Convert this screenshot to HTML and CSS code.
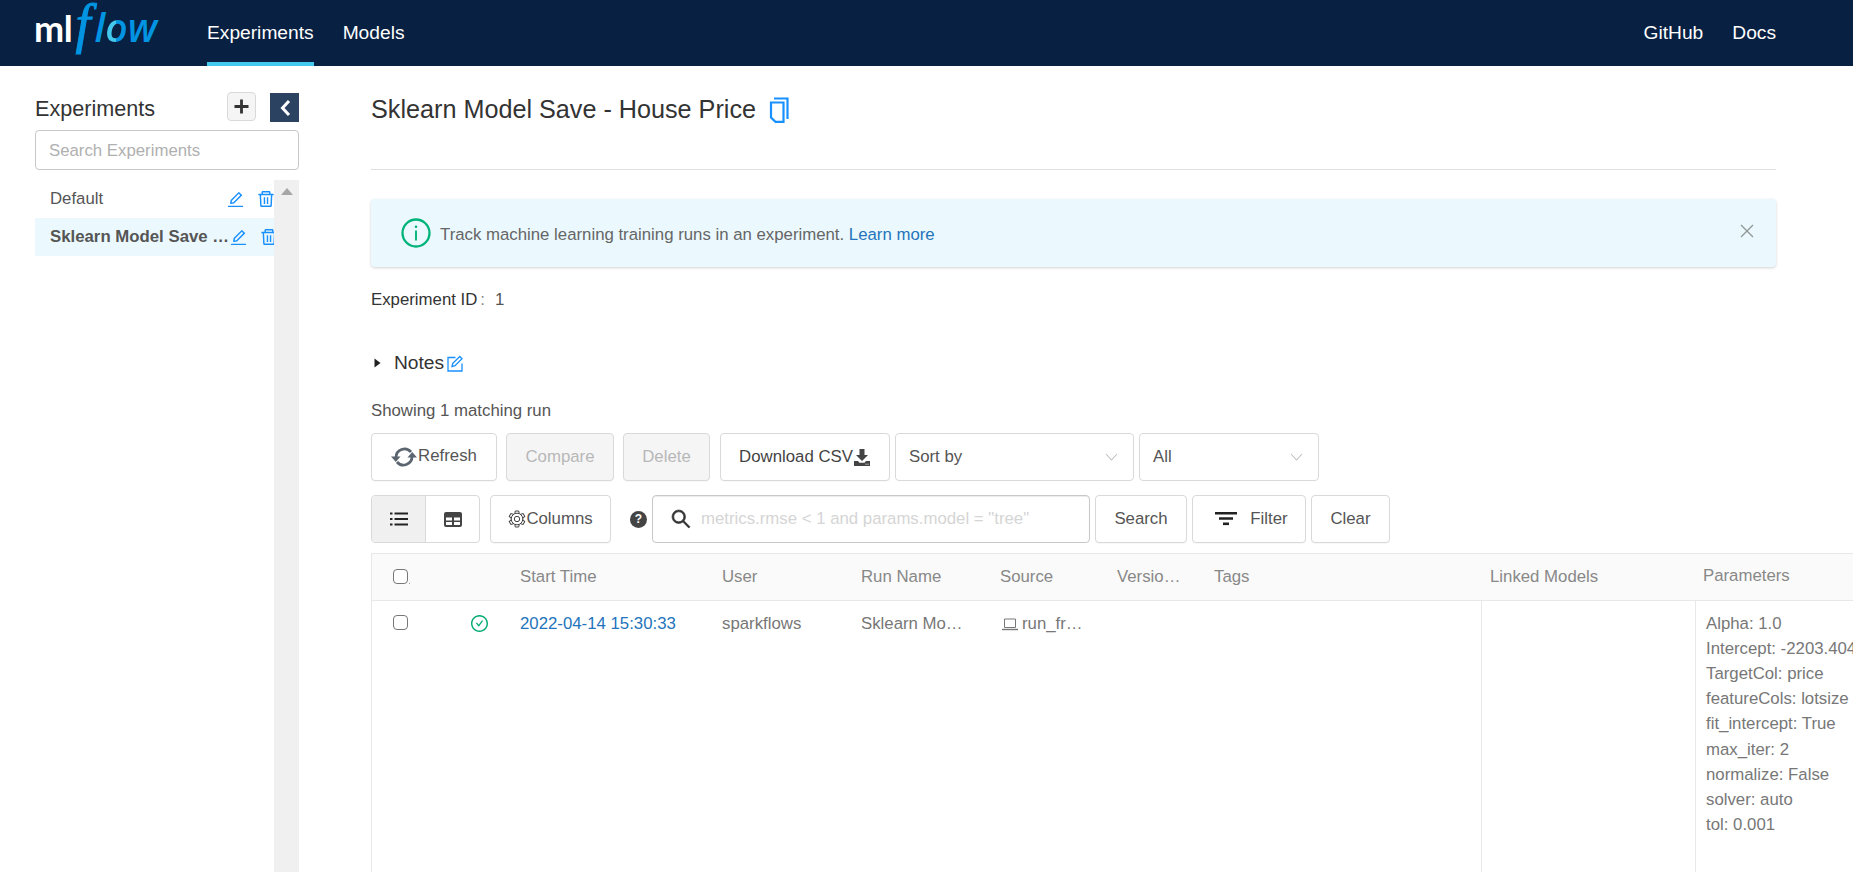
FILE: index.html
```html
<!DOCTYPE html>
<html lang="en">
<head>
<meta charset="utf-8">
<title>MLflow Experiments</title>
<link rel="stylesheet" href="styles.css">
</head>
<body>
<header class="topbar">
  <div class="logo"><span class="logo-ml">ml</span><span class="logo-f">f</span><span class="logo-low">l<span class="logo-o">o</span>w</span></div>
  <nav class="nav-left">
    <a class="nav-link active">Experiments</a>
    <a class="nav-link">Models</a>
  </nav>
  <nav class="nav-right">
    <a class="nav-link">GitHub</a>
    <a class="nav-link">Docs</a>
  </nav>
</header>
<div class="page">
  <aside class="sidebar">
    <div class="side-head">
      <span class="side-title">Experiments</span>
      <button class="plus-btn"><svg width="15" height="15" viewBox="0 0 15 15"><path d="M7.5 0.500v14M0.500 7.500h14" stroke="#333" stroke-width="2.800"/></svg></button>
      <button class="collapse-btn"><svg width="12" height="18" viewBox="0 0 12 18"><path d="M10 2L3.500 9l6.500 7" fill="none" stroke="#fff" stroke-width="3"/></svg></button>
    </div>
    <div class="side-search">Search Experiments</div>
    <div class="side-list">
      <div class="side-items">
        <div class="side-item">
          <span class="side-name">Default</span>
          <svg class="ico-edit" viewBox="64 64 896 896"><path d="M257.7 752c2 0 4-.2 6-.5L431.9 722c2-.4 3.9-1.3 5.3-2.8l423.9-423.9a9.96 9.96 0 0 0 0-14.1L694.9 114.9c-1.9-1.9-4.4-2.9-7.1-2.9s-5.2 1-7.1 2.9L256.8 538.8c-1.5 1.5-2.4 3.3-2.8 5.3l-29.5 168.2a33.5 33.5 0 0 0 9.4 29.8c6.6 6.4 14.9 9.9 23.8 9.9zm67.4-174.4L687.8 215l73.3 73.3-362.7 362.6-88.9 15.7 15.6-89zM880 836H144c-17.7 0-32 14.3-32 32v36c0 4.4 3.6 8 8 8h784c4.4 0 8-3.6 8-8v-36c0-17.7-14.3-32-32-32z"/></svg>
          <svg class="ico-del" viewBox="64 64 896 896"><path d="M360 184h-8c4.4 0 8-3.6 8-8v8h304v-8c0 4.4 3.6 8 8 8h-8v72h72v-80c0-35.3-28.7-64-64-64H352c-35.3 0-64 28.7-64 64v80h72v-72zm504 72H160c-17.7 0-32 14.3-32 32v32c0 4.4 3.6 8 8 8h60.4l24.7 523c1.6 34.1 29.8 61 63.9 61h454c34.2 0 62.3-26.8 63.9-61l24.7-523H888c4.4 0 8-3.6 8-8v-32c0-17.7-14.3-32-32-32zM731.3 840H292.7l-24.2-512h487l-24.2 512z"/><path d="M400 420h70v340h-70zM554 420h70v340h-70z"/></svg>
        </div>
        <div class="side-item selected">
          <span class="side-name">Sklearn Model Save - House Price</span>
          <svg class="ico-edit" viewBox="64 64 896 896"><path d="M257.7 752c2 0 4-.2 6-.5L431.9 722c2-.4 3.9-1.3 5.3-2.8l423.9-423.9a9.96 9.96 0 0 0 0-14.1L694.9 114.9c-1.9-1.9-4.4-2.9-7.1-2.9s-5.2 1-7.1 2.9L256.8 538.8c-1.5 1.5-2.4 3.3-2.8 5.3l-29.5 168.2a33.5 33.5 0 0 0 9.4 29.8c6.6 6.4 14.9 9.9 23.8 9.9zm67.4-174.4L687.8 215l73.3 73.3-362.7 362.6-88.9 15.7 15.6-89zM880 836H144c-17.7 0-32 14.3-32 32v36c0 4.4 3.6 8 8 8h784c4.4 0 8-3.6 8-8v-36c0-17.7-14.3-32-32-32z"/></svg>
          <svg class="ico-del" viewBox="64 64 896 896"><path d="M360 184h-8c4.4 0 8-3.6 8-8v8h304v-8c0 4.4 3.6 8 8 8h-8v72h72v-80c0-35.3-28.7-64-64-64H352c-35.3 0-64 28.7-64 64v80h72v-72zm504 72H160c-17.7 0-32 14.3-32 32v32c0 4.4 3.6 8 8 8h60.4l24.7 523c1.6 34.1 29.8 61 63.9 61h454c34.2 0 62.3-26.8 63.9-61l24.7-523H888c4.4 0 8-3.6 8-8v-32c0-17.7-14.3-32-32-32zM731.3 840H292.7l-24.2-512h487l-24.2 512z"/><path d="M400 420h70v340h-70zM554 420h70v340h-70z"/></svg>
        </div>
      </div>
      <div class="side-scroll"><span class="scroll-up"></span></div>
    </div>
  </aside>
  <main class="main">
    <div class="title-row">
      <h1 class="title">Sklearn Model Save - House Price</h1>
      <svg class="ico-copy" width="20" height="26" viewBox="0 0 20 26"><path d="M5 1.500h13.500v20.500" fill="none" stroke="#1890ff" stroke-width="2.200"/><path d="M2 5.500h12.500v19.300H6.500L2 20.500z" fill="none" stroke="#1890ff" stroke-width="2.200"/></svg>
    </div>
    <hr class="rule">
    <div class="alert">
      <svg class="ico-info" width="30" height="30" viewBox="0 0 30 30"><circle cx="15" cy="15" r="13.500" fill="none" stroke="#00b379" stroke-width="2.300"/><path d="M15 12.500v10" stroke="#00b379" stroke-width="1.900"/><circle cx="15" cy="8.700" r="1.300" fill="#00b379"/></svg>
      <span class="alert-text">Track machine learning training runs in an experiment. <a class="link">Learn more</a></span>
      <svg class="ico-close" width="14" height="14" viewBox="0 0 14 14"><path d="M1 1l12 12M13 1L1 13" stroke="#909896" stroke-width="1.400"/></svg>
    </div>
    <div class="exp-id"><span class="exp-label">Experiment ID</span><span class="exp-colon">:</span><span class="exp-val">1</span></div>
    <div class="notes">
      <svg class="caret" width="7" height="10" viewBox="0 0 7 10"><path d="M0.500 0.500L6.500 5L0.500 9.500z" fill="#222"/></svg>
      <span class="notes-text">Notes</span>
      <svg class="ico-note" width="16" height="17" viewBox="0 0 16 17"><path d="M8.500 2.500H1v13.500h14V8.500" fill="none" stroke="#1890ff" stroke-width="1.300"/><path d="M5 11.500l.8-3.200L12.800 1.500l2.200 2.200L8 10.700z" fill="none" stroke="#1890ff" stroke-width="1.300"/></svg>
    </div>
    <div class="showing">Showing 1 matching run</div>
    <div class="toolbar tb-one">
      <button class="btn b-refresh"><svg width="26" height="22" viewBox="0 0 26 22"><path d="M5 11.500A8.500 8.500 0 0 1 20 6" fill="none" stroke="#5a6570" stroke-width="2.800"/><path d="M21 10.500A8.500 8.500 0 0 1 6 16" fill="none" stroke="#5a6570" stroke-width="2.800"/><path d="M0 10.500h9.500L4.800 16zM16.500 11.500h9.500L21.200 6z" fill="#5a6570"/></svg><span class="refresh-text">Refresh</span></button>
      <button class="btn disabled b-compare">Compare</button>
      <button class="btn disabled b-delete">Delete</button>
      <button class="btn b-download"><span>Download CSV</span><svg width="18" height="17" viewBox="0 0 18 17"><path d="M6.500 0h5v6H15l-6 6-6-6h3.500z" fill="#444"/><path d="M1 12h4l1.500 1.700h5L13 12h4v5H1z" fill="#444"/><path d="M12.500 15.200h1M14.500 15.200h1" stroke="#fff"/></svg></button>
      <div class="select s-sort"><span>Sort by</span><svg width="13" height="8" viewBox="0 0 13 8"><path d="M1 1l5.500 6L12 1" fill="none" stroke="#bfbfbf" stroke-width="1.100"/></svg></div>
      <div class="select s-all"><span>All</span><svg width="13" height="8" viewBox="0 0 13 8"><path d="M1 1l5.500 6L12 1" fill="none" stroke="#bfbfbf" stroke-width="1.100"/></svg></div>
    </div>
    <div class="toolbar tb-two">
      <div class="switch">
        <span class="sw-item on"><svg width="18" height="14" viewBox="0 0 18 14"><path d="M0 1.500h2.500M4.500 1.500H18M0 7h2.500M4.500 7H18M0 12.500h2.500M4.500 12.500H18" stroke="#222" stroke-width="2.200"/></svg></span>
        <span class="sw-item"><svg width="18" height="15" viewBox="0 0 18 15"><path d="M2 0h14a2 2 0 0 1 2 2v11a2 2 0 0 1-2 2H2a2 2 0 0 1-2-2V2a2 2 0 0 1 2-2z" fill="#444"/><path d="M2 5.500h6v3H2zM10 5.500h6v3h-6zM2 10h6v3H2zM10 10h6v3h-6z" fill="#fff"/></svg></span>
      </div>
      <button class="btn b-columns"><svg width="18" height="18" viewBox="0 0 18 18"><g fill="none" stroke="#444" stroke-width="1"><circle cx="9" cy="9" r="2.700"/><circle cx="9" cy="9" r="5.800"/><path d="M6.800 3.500L7.300 1h3.400l.5 2.500"/><path d="M6.800 3.500L7.300 1h3.400l.5 2.500" transform="rotate(60 9 9)"/><path d="M6.800 3.500L7.300 1h3.400l.5 2.500" transform="rotate(120 9 9)"/><path d="M6.800 3.500L7.300 1h3.400l.5 2.500" transform="rotate(180 9 9)"/><path d="M6.800 3.500L7.300 1h3.400l.5 2.500" transform="rotate(240 9 9)"/><path d="M6.800 3.500L7.300 1h3.400l.5 2.500" transform="rotate(300 9 9)"/></g></svg><span>Columns</span></button>
      <span class="help">?</span>
      <div class="search-box">
        <svg class="ico-search" viewBox="64 64 896 896"><path d="M909.6 854.5L649.9 594.8C690.2 542.7 712 479 712 412c0-80.2-31.3-155.4-87.9-212.1-56.6-56.7-132-87.9-212.1-87.9s-155.5 31.3-212.1 87.9C143.2 256.5 112 331.8 112 412c0 80.1 31.3 155.5 87.9 212.1C256.5 680.8 331.8 712 412 712c67 0 130.6-21.8 182.7-62l259.7 259.6a8.2 8.2 0 0 0 11.6 0l43.6-43.5a8.2 8.2 0 0 0 0-11.6zM570.4 570.4C528 612.7 471.8 636 412 636s-116-23.3-158.4-65.6C211.3 528 188 471.8 188 412s23.3-116.1 65.6-158.4C296 211.3 352.2 188 412 188s116.1 23.2 158.4 65.6S636 352.2 636 412s-23.3 116.1-65.6 158.4z"/></svg>
        <span class="placeholder">metrics.rmse &lt; 1 and params.model = "tree"</span>
      </div>
      <button class="btn b-search">Search</button>
      <button class="btn b-filter"><svg width="22" height="14" viewBox="0 0 22 14"><path d="M0 1.200h22M4 6.500h14" stroke="#222" stroke-width="2.400"/><path d="M8 11.800h6" stroke="#222" stroke-width="2.600"/></svg><span>Filter</span></button>
      <button class="btn b-clear">Clear</button>
    </div>
    <div class="table">
      <div class="thead">
        <span class="col c-check"><span class="checkbox"></span><i class="dot"></i></span>
        <span class="col c-status"></span>
        <span class="col c-time">Start Time</span>
        <span class="col c-user">User</span>
        <span class="col c-name">Run Name</span>
        <span class="col c-source">Source</span>
        <span class="col c-version">Versio…</span>
        <span class="col c-tags">Tags</span>
        <span class="col c-linked">Linked Models</span>
        <span class="col c-params">Parameters</span>
      </div>
      <div class="tbody">
        <span class="col c-check"><span class="checkbox"></span></span>
        <span class="col c-status"><svg class="ico-ok" viewBox="64 64 896 896"><path d="M699 353h-46.900c-10.200 0-19.900 4.900-25.900 13.300L469 584.300l-71.200-98.800c-6-8.300-15.600-13.300-25.900-13.300H325c-6.500 0-10.300 7.400-6.500 12.700l124.600 172.800a31.800 31.800 0 0 0 51.700 0l210.600-292c3.900-5.300.1-12.700-6.400-12.700z"/><path d="M512 64C264.600 64 64 264.600 64 512s200.600 448 448 448 448-200.600 448-448S759.400 64 512 64zm0 820c-205.400 0-372-166.600-372-372s166.600-372 372-372 372 166.600 372 372-166.600 372-372 372z"/></svg></span>
        <span class="col c-time"><a class="link">2022-04-14 15:30:33</a></span>
        <span class="col c-user">sparkflows</span>
        <span class="col c-name">Sklearn Mo…</span>
        <span class="col c-source"><svg class="ico-laptop" width="16" height="13" viewBox="0 0 16 13"><path d="M2.500 1h11v8.500h-11z" fill="none" stroke="#777"/><path d="M0 11.500h16" stroke="#777" stroke-width="1.400"/></svg>run_fr…</span>
        <span class="col c-version"></span>
        <span class="col c-tags"></span>
        <span class="col c-linked"></span>
        <div class="col c-params">
          <div>Alpha: 1.0</div>
          <div>Intercept: -2203.4045</div>
          <div>TargetCol: price</div>
          <div>featureCols: lotsize</div>
          <div>fit_intercept: True</div>
          <div>max_iter: 2</div>
          <div>normalize: False</div>
          <div>solver: auto</div>
          <div>tol: 0.001</div>
        </div>
      </div>
    </div>
  </main>
</div>
</body>
</html>
```
FILE: styles.css
```css
* { box-sizing: border-box; }
html, body { margin: 0; height: 872px; overflow: hidden; background: #fff; }
body { font-family: "Liberation Sans", Arial, sans-serif; font-size: 16.800px; color: #555; }
button { font: inherit; margin: 0; }
svg { display: block; flex: none; }

.topbar { height: 66px; background: #082142; display: flex; align-items: stretch; padding-left: 34px; padding-right: 77px; }
.logo { width: 173px; height: 60px; display: flex; align-items: baseline; line-height: 1; white-space: nowrap; padding-top: 3px; }
.logo-ml { font-family: Lato, sans-serif; font-weight: 700; font-size: 36px; color: #fff; letter-spacing: -0.3px; }
.logo-f { font-family: "Liberation Serif", serif; font-style: italic; font-size: 54px; line-height: 0.8; color: #0194e2; margin-left: 3px; margin-right: 4px; -webkit-text-stroke: 1px #0194e2; }
.logo-low { font-family: "Open Sans", sans-serif; font-style: italic; font-weight: 600; font-size: 39px; color: #0194e2; }
.logo-o { background: linear-gradient(to right, #43c9ed 50%, #0194e2 50%); -webkit-background-clip: text; background-clip: text; color: transparent; }
.nav-left, .nav-right { display: flex; gap: 29px; }
.nav-link { display: flex; align-items: center; color: #fff; font-size: 19.200px; border-bottom: 4px solid transparent; padding-top: 4px; }
.nav-right { margin-left: auto; }
.nav-link.active { border-bottom-color: #43c9ed; }

.page { display: flex; height: 806px; }
.sidebar { width: 371px; flex: none; padding: 26px 0 0 35px; display: flex; flex-direction: column; }
.side-head { width: 264px; height: 38px; display: flex; align-items: flex-start; }
.side-title { font-size: 21.600px; color: #333; margin-top: 3px; line-height: 28px; flex: 1; }
.plus-btn { width: 29px; height: 29px; padding: 0; border: 1px solid #d9d9d9; border-radius: 4px; background: #f5f5f5; display: flex; align-items: center; justify-content: center; }
.collapse-btn { width: 29px; height: 29px; padding: 0; margin-left: 14px; margin-top: 1px; border: 0; background: #2c4261; display: flex; align-items: center; justify-content: center; }
.side-search { width: 264px; height: 40px; border: 1px solid #c8c8c8; border-radius: 4px; padding-left: 13px; line-height: 39px; font-size: 16.800px; color: #b0b0b0; }
.side-list { width: 264px; flex: 1; margin-top: 10px; display: flex; }
.side-items { width: 239px; flex: none; overflow: hidden; }
.side-item { height: 38px; display: flex; align-items: center; padding-left: 15px; white-space: nowrap; font-size: 16.800px; }
.side-item.selected { background: #ebf9fe; font-weight: 700; padding-left: 15px; }
.side-name { width: 177px; overflow: hidden; text-overflow: ellipsis; flex: none; }
.selected .side-name { width: 180px; }
.ico-edit { width: 17px; height: 17px; fill: #1890ff; flex: none; }
.ico-del { width: 18px; height: 18px; fill: #1890ff; margin-left: 13px; flex: none; }
.side-scroll { width: 25px; background: #f0f0f0; display: flex; justify-content: center; padding-top: 8px; }
.scroll-up { width: 0; height: 0; border-left: 6px solid transparent; border-right: 6px solid transparent; border-bottom: 7px solid #a6a6a6; }

.main { width: 1405px; flex: none; padding-top: 28px; }
.title-row { display: flex; align-items: center; height: 31px; gap: 13px; }
.title { margin: 0; font-size: 25.200px; font-weight: 400; color: #333; line-height: 31px; }
.rule { border: 0; border-top: 1px solid #dfdfdf; margin: 44px 0 0; height: 0; }
.alert { margin-top: 29px; height: 68px; background: #ebf9fe; border-radius: 4px; box-shadow: 0 1px 3px rgba(0,0,0,.18); display: flex; align-items: center; padding: 0 22px 0 30px; }
.alert-text { margin-left: 9px; margin-top: 3px; flex: 1; color: #666; }
.ico-close { margin-top: -4px; }
.link { color: #2374bb; }
.exp-id { margin-top: 23px; height: 20px; line-height: 20px; display: flex; color: #333; }
.exp-colon { margin: 0 10px 0 3px; color: #888; }
.exp-val { color: #555; }
.notes { margin-top: 41px; height: 24px; display: flex; align-items: center; font-size: 19.200px; color: #333; }
.caret { margin-left: 3px; margin-right: 13px; }
.ico-note { margin-left: 3px; }
.showing { margin-top: 26px; height: 22px; line-height: 20px; color: #555; }
.toolbar { display: flex; height: 48px; }
.tb-one { margin-top: 10px; }
.tb-two { margin-top: 14px; }
.btn { height: 48px; background: #fff; border: 1px solid #d9d9d9; border-radius: 4px; font-size: 16.800px; color: #555; padding: 0; display: flex; align-items: center; justify-content: center; box-shadow: 0 1px 1px rgba(0,0,0,.03); }
.btn.disabled { background: #f5f5f5; color: #b8b8b8; }
.b-refresh { width: 126px; margin-right: 9px; }
.refresh-text { margin-bottom: 3px; margin-left: 1px; }
.b-compare { width: 108px; margin-right: 9px; }
.b-delete { width: 87px; margin-right: 10px; }
.b-download { width: 170px; margin-right: 5px; color: #444; }
.select { height: 48px; border: 1px solid #d9d9d9; border-radius: 4px; display: flex; align-items: center; justify-content: space-between; padding: 0 15px 0 13px; color: #555; }
.s-sort { width: 239px; margin-right: 5px; }
.s-all { width: 180px; }
.switch { width: 109px; height: 48px; border: 1px solid #d9d9d9; border-radius: 4px; display: flex; overflow: hidden; }
.sw-item { flex: 1; display: flex; align-items: center; justify-content: center; }
.sw-item.on { background: #f0f0f0; border-right: 1px solid #d9d9d9; }
.b-columns { width: 121px; margin-left: 10px; }
.help { width: 17px; height: 17px; border-radius: 50%; background: #444; color: #fff; font-size: 12px; font-weight: 700; text-align: center; line-height: 17px; margin: 16px 5px 0 19px; }
.search-box { width: 438px; height: 48px; border: 1px solid #c8c8c8; border-radius: 4px; display: flex; align-items: center; padding-left: 18px; box-shadow: inset 0 1px 1px rgba(0,0,0,.08); }
.ico-search { width: 20px; height: 20px; fill: #333; stroke: #333; stroke-width: 30; margin-right: 10px; }
.placeholder { color: #d5d5d5; white-space: nowrap; }
.b-search { width: 92px; margin-left: 5px; }
.b-filter { width: 114px; margin-left: 5px; gap: 13px; padding-left: 5px; }
.b-clear { width: 79px; margin-left: 5px; }

.table { margin-top: 10px; width: 1482px; --cols: 66px 82px 202px 139px 139px 117px 97px 267px 214px 1fr; }
.thead { height: 48px; background: #fafafa; border-top: 1px solid #e8e8e8; border-bottom: 1px solid #e8e8e8; border-left: 1px solid #e8e8e8; display: grid; grid-template-columns: var(--cols); align-items: center; color: #888; }
.tbody { height: 300px; border-left: 1px solid #e8e8e8; display: grid; grid-template-columns: var(--cols); color: #777; }
.col { white-space: nowrap; display: block; }
.thead .c-check { padding-left: 21px; display: flex; margin-top: -2px; }
.thead .c-linked { padding-left: 9px; }
.thead .c-params { padding-left: 8px; margin-top: -3px; }
.checkbox { width: 15px; height: 15px; display: block; border: 1px solid #777; border-radius: 4px; background: #fff; }
.dot { width: 1px; height: 1px; background: #999; align-self: flex-end; margin-left: 1px; }
.tbody .col { padding-top: 13px; line-height: 20px; }
.tbody .c-check { padding-left: 21px; padding-top: 14px; }
.ico-ok { width: 17px; height: 17px; fill: #00a972; margin-left: 33px; margin-top: 1px; }
.tbody .c-source { display: flex; align-items: flex-start; padding-left: 2px; }
.ico-laptop { margin-top: 4px; margin-right: 4px; }
.tbody .c-linked { border-left: 1px solid #e8e8e8; }
.tbody .c-params { border-left: 1px solid #e8e8e8; padding-left: 10px; padding-top: 9.600px; line-height: 25.200px; overflow: hidden; }
```
